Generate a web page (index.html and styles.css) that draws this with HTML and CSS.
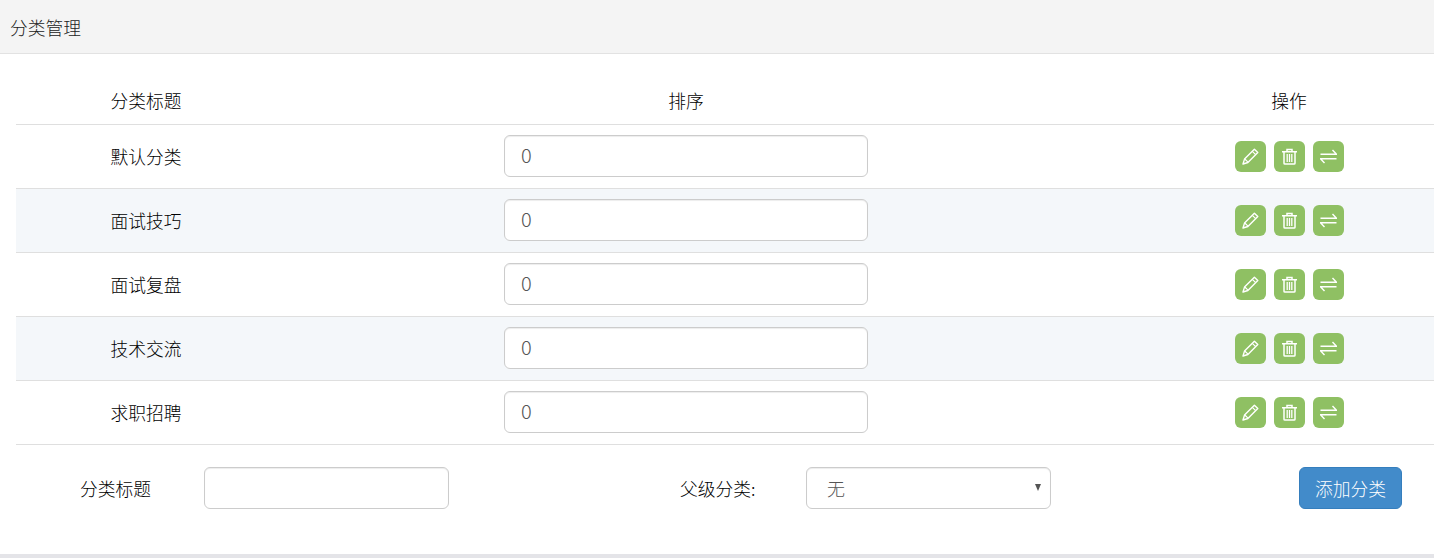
FILE: index.html
```html
<!DOCTYPE html>
<html>
  <head>
    <title>分类管理</title>
    <link rel="stylesheet" href="styles.css">
  </head>
  <body>
    <svg class="sprites" width="0" height="0">
      <symbol id="iconEdit" viewBox="0 0 17 17">
        <path d="M12.4 1.2l3.4 3.4L5.9 14.5 1 16l1.5-4.9z" fill="none" stroke="#fff" stroke-width="1.4" stroke-linejoin="round"/>
        <path d="M10.3 3.3l3.4 3.4M2.8 11l3.2 3.2" fill="none" stroke="#fff" stroke-width="1.2"/>
      </symbol>
      <symbol id="iconTrash" viewBox="0 0 17 17">
        <path d="M1 3.8h15M6 3.5V1.5h5v2M3 4v11.2c0 .5.4.9.9.9h9.2c.5 0 .9-.4.9-.9V4" fill="none" stroke="#fff" stroke-width="1.5"/>
        <path d="M6.2 6v8M8.5 6v8M10.8 6v8" fill="none" stroke="#fff" stroke-width="1.3"/>
      </symbol>
      <symbol id="iconSwap" viewBox="0 0 17 17">
        <path d="M.5 6.2h16l-4-4.2M16.5 10.8H.5l4 4.2" fill="none" stroke="#fff" stroke-width="1.4"/>
      </symbol>
    </svg>

    <div class="panel">
      <div class="panelHead">分类管理</div>
      <div class="panelBody">
        <div class="row headRow">
          <div class="cellTitle">分类标题</div>
          <div class="cellSort">排序</div>
          <div class="cellOps">操作</div>
        </div>

        <div class="row">
          <div class="cellTitle">默认分类</div>
          <div class="cellSort"><input class="field sortField" type="text" value="0"></div>
          <div class="cellOps">
            <button class="iconBtn"><svg><use href="#iconEdit"/></svg></button>
            <button class="iconBtn"><svg><use href="#iconTrash"/></svg></button>
            <button class="iconBtn"><svg><use href="#iconSwap"/></svg></button>
          </div>
        </div>
        <div class="row striped">
          <div class="cellTitle">面试技巧</div>
          <div class="cellSort"><input class="field sortField" type="text" value="0"></div>
          <div class="cellOps">
            <button class="iconBtn"><svg><use href="#iconEdit"/></svg></button>
            <button class="iconBtn"><svg><use href="#iconTrash"/></svg></button>
            <button class="iconBtn"><svg><use href="#iconSwap"/></svg></button>
          </div>
        </div>
        <div class="row">
          <div class="cellTitle">面试复盘</div>
          <div class="cellSort"><input class="field sortField" type="text" value="0"></div>
          <div class="cellOps">
            <button class="iconBtn"><svg><use href="#iconEdit"/></svg></button>
            <button class="iconBtn"><svg><use href="#iconTrash"/></svg></button>
            <button class="iconBtn"><svg><use href="#iconSwap"/></svg></button>
          </div>
        </div>
        <div class="row striped">
          <div class="cellTitle">技术交流</div>
          <div class="cellSort"><input class="field sortField" type="text" value="0"></div>
          <div class="cellOps">
            <button class="iconBtn"><svg><use href="#iconEdit"/></svg></button>
            <button class="iconBtn"><svg><use href="#iconTrash"/></svg></button>
            <button class="iconBtn"><svg><use href="#iconSwap"/></svg></button>
          </div>
        </div>
        <div class="row">
          <div class="cellTitle">求职招聘</div>
          <div class="cellSort"><input class="field sortField" type="text" value="0"></div>
          <div class="cellOps">
            <button class="iconBtn"><svg><use href="#iconEdit"/></svg></button>
            <button class="iconBtn"><svg><use href="#iconTrash"/></svg></button>
            <button class="iconBtn"><svg><use href="#iconSwap"/></svg></button>
          </div>
        </div>

        <div class="addForm">
          <label class="addLabel titleLabel">分类标题</label>
          <input class="field addField" type="text">
          <label class="addLabel parentLabel">父级分类:</label>
          <div class="selectWrap">
            <select class="field addField parentSelect">
              <option>无</option>
            </select>
          </div>
          <button class="addBtn">添加分类</button>
        </div>
      </div>
    </div>
  </body>
</html>
```

FILE: styles.css
```css
* {
  box-sizing: border-box;
}
body {
  margin: 0;
  background-color: #e4e4e8;
  color: #000;
  font-family: "Noto Sans CJK SC", "Liberation Sans", sans-serif;
  font-size: 17.75px;
  font-weight: 300;
  overflow: hidden;
}
.sprites {
  display: block;
  height: 0;
}
.panel {
  background-color: #fff;
  height: 554px;
}
.panelHead {
  height: 54px;
  padding: 1px 10px 0;
  display: flex;
  align-items: center;
  background-color: #f4f4f4;
  border-bottom: 1px solid #e2e2e2;
  color: #222;
}
.panelBody {
  padding-left: 16px;
}
.row {
  display: grid;
  grid-template-columns: 260px 820px 1fr;
  align-items: center;
  height: 64px;
  padding-bottom: 2px;
  border-bottom: 1px solid #dfdfdf;
}
.headRow {
  height: 71px;
  padding-top: 25px;
  padding-bottom: 3px;
}
.striped {
  background-color: #f4f7fa;
}
.cellTitle,
.cellSort {
  text-align: center;
}
.cellSort {
  display: flex;
  justify-content: center;
}
.cellOps {
  display: flex;
  justify-content: center;
  gap: 8px;
  padding-left: 48px;
}
.row:not(.headRow) .cellOps {
  padding-top: 2px;
}
.field {
  height: 42px;
  border: 1px solid #ccc;
  border-radius: 6px;
  background-color: #fff;
  box-shadow: inset 0 1px 1px rgba(0, 0, 0, 0.075);
  color: #555;
  font-family: "Noto Sans CJK SC", "Liberation Sans", sans-serif;
  font-size: 18px;
  font-weight: 300;
  outline: none;
}
.sortField {
  width: 364px;
  padding: 0 16px 2px;
  font-size: 20px;
}
.iconBtn {
  width: 31px;
  height: 31px;
  padding: 0;
  display: flex;
  align-items: center;
  justify-content: center;
  border: none;
  border-radius: 6px;
  background-color: #8fc063;
}
.iconBtn svg {
  width: 17px;
  height: 17px;
}
.addForm {
  display: flex;
  align-items: center;
  height: 109px;
  padding: 0 32px 24px 64px;
}
.addLabel {
  display: block;
}
.titleLabel {
  width: 124px;
}
.addField {
  width: 245px;
  padding: 0 16px;
}
.parentLabel {
  width: 126px;
  margin-left: 231px;
}
.selectWrap {
  position: relative;
}
.selectWrap::after {
  content: "";
  position: absolute;
  top: 17px;
  right: 10px;
  border-left: 3.5px solid transparent;
  border-right: 3.5px solid transparent;
  border-top: 7px solid #555;
}
.parentSelect {
  display: block;
  padding-left: 20px;
  appearance: none;
}
.addBtn {
  width: 103px;
  height: 42px;
  margin-left: 248px;
  padding: 0;
  border: 1px solid #357ebd;
  border-radius: 6px;
  background-color: #428bca;
  color: #fff;
  font-family: "Noto Sans CJK SC", "Liberation Sans", sans-serif;
  font-size: 17.75px;
  font-weight: 300;
}
```
